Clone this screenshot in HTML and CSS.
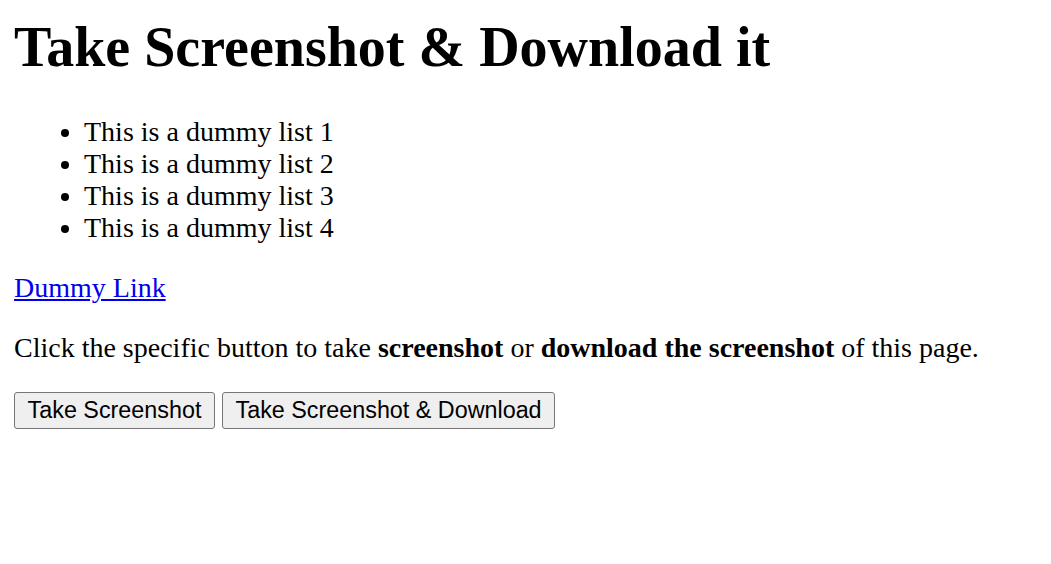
FILE: index.html
```html
<!DOCTYPE html>
<html>
<head>
<meta charset="utf-8">
<title>Take Screenshot</title>
<link rel="stylesheet" href="styles.css">
</head>
<body class="page">
<h1 class="title">Take Screenshot &amp; Download it</h1>
<ul class="list">
<li>This is a dummy list 1</li>
<li>This is a dummy list 2</li>
<li>This is a dummy list 3</li>
<li>This is a dummy list 4</li>
</ul>
<p class="para"><a class="link" href="#">Dummy Link</a></p>
<p class="para">Click the specific button to take <b>screenshot</b> or <b>download the screenshot</b> of this page.</p>
<div class="actions"><button class="btn">Take Screenshot</button> <button class="btn">Take Screenshot &amp; Download</button></div>
</body>
</html>
```
FILE: styles.css
```css
html {
  background: #fff;
}
.page {
  margin: 14px;
  font-family: "Liberation Serif", "Times New Roman", serif;
  font-size: 28px;
  color: #000;
}
.title {
  font-size: 56px;
  font-weight: bold;
  margin: 1px 0 37px;
}
.list {
  margin: 0 0 28px;
  padding-left: 70px;
}
.para {
  margin: 28px 0;
}
.link {
  color: #0000ee;
}
.actions {
  margin: 0;
}
.btn {
  font-family: "Liberation Sans", Arial, sans-serif;
  font-size: 23.33px;
  color: #000;
  background: #efefef;
  border: 1px solid #767676;
  border-radius: 3px;
  padding: 4px 12.6px;
  margin: 0;
  line-height: normal;
}
```
